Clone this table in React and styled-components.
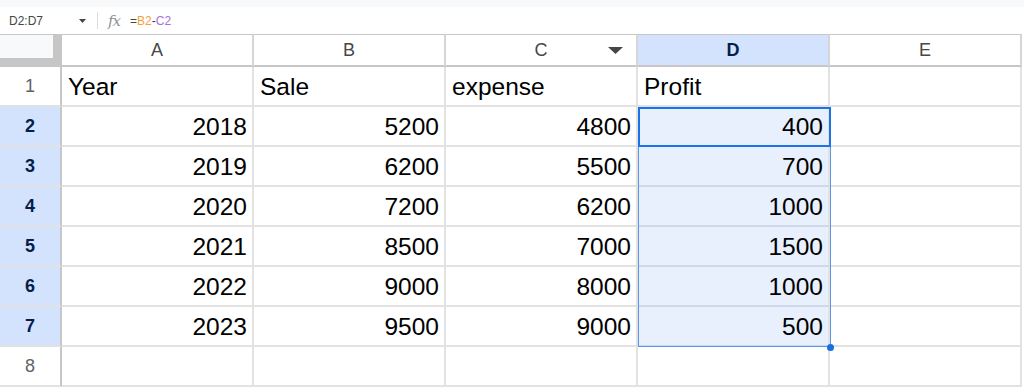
import React from 'react';
import styled, { createGlobalStyle, css } from 'styled-components';

const GlobalStyle = createGlobalStyle`
  html, body { margin: 0; padding: 0; background: #ffffff; }
  body {
    font-family: "Liberation Sans", Arial, sans-serif;
    width: 1024px;
    height: 388px;
    overflow: hidden;
  }
`;

const COLORS = {
  grid: '#e2e2e2',
  headerLine: '#c7c7c7',
  headerSep: '#d6d6d6',
  selHeader: '#d3e3fd',
  selCell: '#e8f0fe',
  selText: '#041e49',
  blue: '#1a73e8',
};

const Page = styled.div`
  width: 1024px;
  height: 388px;
  overflow: hidden;
  background: #ffffff;
`;

const TopStrip = styled.div`
  height: 7px;
  background: #f8f9fb;
`;

const FormulaBar = styled.div`
  height: 27px;
  display: flex;
  align-items: center;
  padding-left: 9px;
  box-sizing: border-box;
  font-size: 12px;
  color: #444746;
`;

const NameBox = styled.div`
  width: 70px;
  line-height: 14px;
`;

const Caret = styled.svg`
  width: 7px;
  height: 4px;
  display: block;
`;

const Separator = styled.div`
  width: 1px;
  height: 17px;
  margin-left: 11px;
  background: #dadce0;
`;

const FxLabel = styled.span`
  margin-left: 10px;
  font-family: "DejaVu Serif", "Liberation Serif", serif;
  font-style: italic;
  font-size: 15px;
  color: #8f9397;
  line-height: 16px;
  letter-spacing: -1px;
`;

const Formula = styled.div`
  margin-left: 10px;
  line-height: 14px;
`;

const Ref = styled.span`
  color: ${p => p.$color};
`;

const Sheet = styled.div`
  display: grid;
  grid-template-columns: 62px repeat(5, 192px);
  grid-template-rows: 33px repeat(8, 40px);
`;

const Corner = styled.div`
  grid-area: 1 / 1;
  box-sizing: border-box;
  background: #f8f9fa;
  border-top: 1px solid ${COLORS.headerLine};
  border-right: 9px solid #c6c6c6;
  border-bottom: 9px solid #c6c6c6;
`;

const ColHeader = styled.div`
  grid-area: 1 / ${p => p.$c};
  box-sizing: border-box;
  border-top: 1px solid ${COLORS.headerLine};
  border-bottom: 2px solid ${COLORS.headerLine};
  border-right: 2px solid ${COLORS.headerSep};
  display: grid;
  grid-template-columns: 1fr auto 1fr;
  align-items: center;
  line-height: 30px;
  font-size: 18px;
  color: #474747;
  background: #ffffff;
  ${p => p.$selected && css`
    background: ${COLORS.selHeader};
    color: ${COLORS.selText};
    font-weight: bold;
  `}
`;

const HeaderLetter = styled.span`
  grid-column: 2;
`;

const HeaderMenu = styled.svg`
  grid-column: 3;
  justify-self: end;
  margin-right: 13px;
  width: 15px;
  height: 7px;
  display: block;
`;

const RowHeader = styled.div`
  grid-area: ${p => p.$r} / 1;
  box-sizing: border-box;
  border-right: 2px solid #c6c6c6;
  border-bottom: 2px solid ${COLORS.grid};
  text-align: center;
  line-height: 38px;
  font-size: 18px;
  color: #5f6368;
  background: #ffffff;
  ${p => p.$selected && css`
    background: ${COLORS.selHeader};
    color: ${COLORS.selText};
    font-weight: bold;
  `}
`;

const Cell = styled.div`
  grid-area: ${p => p.$r} / ${p => p.$c};
  box-sizing: border-box;
  border-right: 2px solid ${COLORS.grid};
  border-bottom: 2px solid ${COLORS.grid};
  padding: 2px 5px 0 6px;
  line-height: 36px;
  font-size: 24.5px;
  color: #000000;
  white-space: nowrap;
  overflow: hidden;
  text-align: ${p => (p.$num ? 'right' : 'left')};
  background: #ffffff;
  ${p => p.$selected && css`
    background: ${COLORS.selCell};
    border-bottom-color: #cfd8e6;
  `}
`;

const RangeBox = styled.div`
  grid-area: 3 / 5 / 9 / 6;
  box-sizing: border-box;
  margin-right: -1px;
  border: 1px solid #5b95ea;
  position: relative;
  pointer-events: none;
  z-index: 1;
`;

const ActiveBox = styled.div`
  grid-area: 3 / 5 / 4 / 6;
  box-sizing: border-box;
  margin-right: -1px;
  border: 2px solid ${COLORS.blue};
  pointer-events: none;
  z-index: 2;
`;

const FillHandle = styled.span`
  position: absolute;
  right: -4px;
  bottom: -5px;
  width: 7px;
  height: 7px;
  border-radius: 50%;
  background: #1a6fe0;
`;

const columns = ['A', 'B', 'C', 'D', 'E'];

const data = [
  ['Year', 'Sale', 'expense', 'Profit', ''],
  [2018, 5200, 4800, 400, ''],
  [2019, 6200, 5500, 700, ''],
  [2020, 7200, 6200, 1000, ''],
  [2021, 8500, 7000, 1500, ''],
  [2022, 9000, 8000, 1000, ''],
  [2023, 9500, 9000, 500, ''],
  ['', '', '', '', ''],
];

const isSelected = (rowIdx, colIdx) => colIdx === 3 && rowIdx >= 1 && rowIdx <= 6;

export default function App() {
  return (
    <Page>
      <GlobalStyle />
      <TopStrip />
      <FormulaBar>
        <NameBox>D2:D7</NameBox>
        <Caret viewBox="0 0 7 4">
          <polygon points="0,0 7,0 3.5,4" fill="#444746" />
        </Caret>
        <Separator />
        <FxLabel>fx</FxLabel>
        <Formula>
          =<Ref $color="#f5a03c">B2</Ref>-<Ref $color="#a372d6">C2</Ref>
        </Formula>
      </FormulaBar>
      <Sheet>
        <Corner />
        {columns.map((c, i) => (
          <ColHeader key={c} $c={i + 2} $selected={c === 'D'}>
            <HeaderLetter>{c}</HeaderLetter>
            {c === 'C' && (
              <HeaderMenu viewBox="0 0 15 7">
                <polygon points="0,0 15,0 7.5,7" fill="#444746" />
              </HeaderMenu>
            )}
          </ColHeader>
        ))}
        {data.map((row, r) => (
          <React.Fragment key={r}>
            <RowHeader $r={r + 2} $selected={r >= 1 && r <= 6}>
              {r + 1}
            </RowHeader>
            {row.map((v, c) => (
              <Cell
                key={c}
                $r={r + 2}
                $c={c + 2}
                $num={typeof v === 'number'}
                $selected={isSelected(r, c)}
              >
                {v}
              </Cell>
            ))}
          </React.Fragment>
        ))}
        <RangeBox>
          <FillHandle />
        </RangeBox>
        <ActiveBox />
      </Sheet>
    </Page>
  );
}
